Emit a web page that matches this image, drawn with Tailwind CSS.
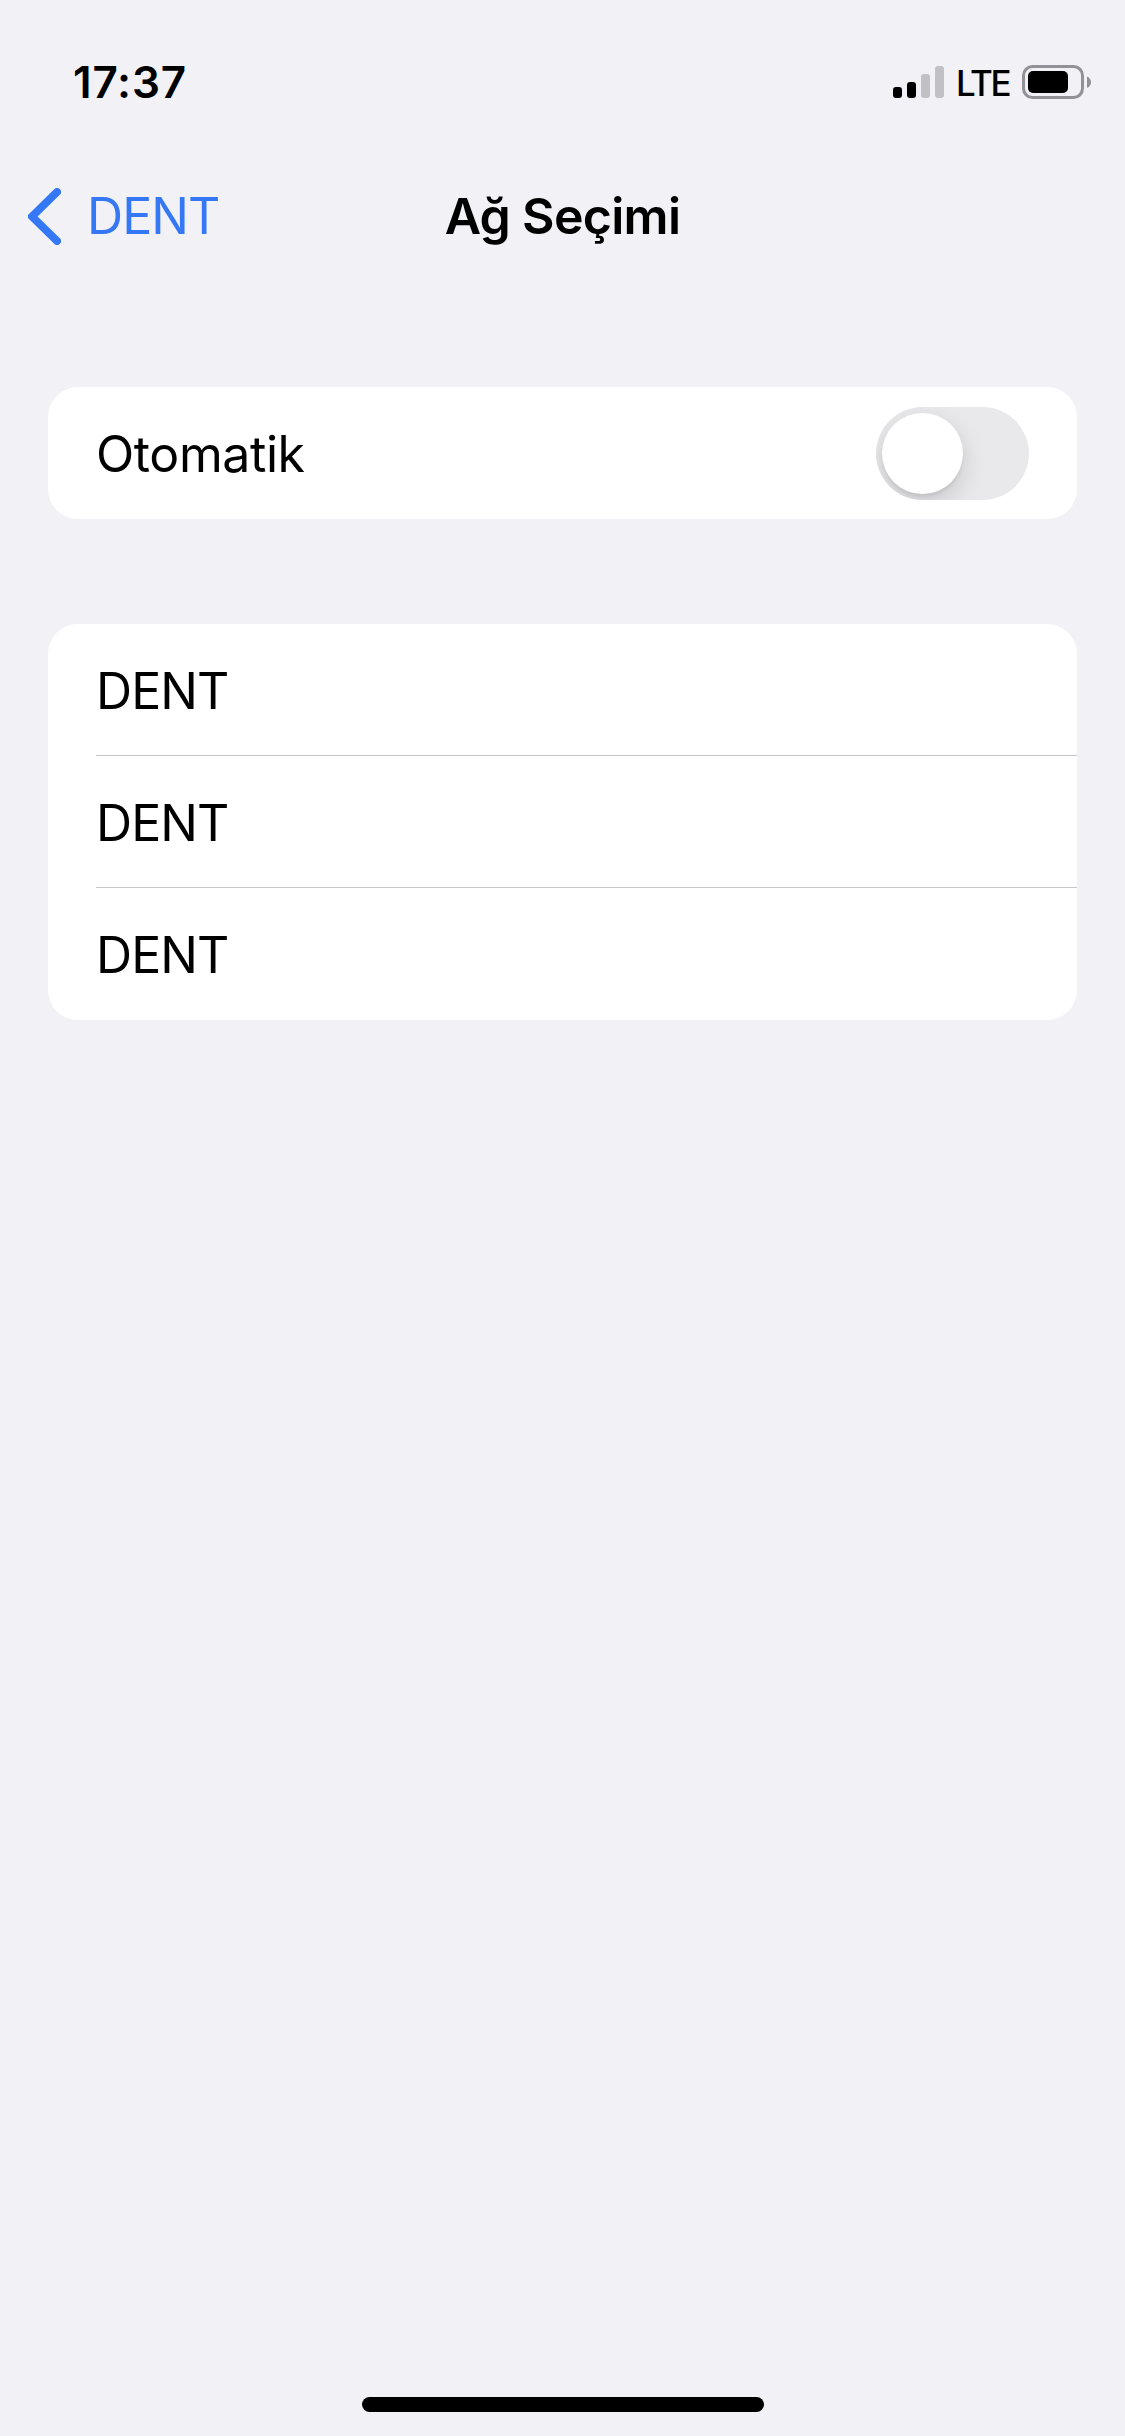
<!DOCTYPE html>
<html lang="tr">
<head>
<meta charset="utf-8">
<title>Ağ Seçimi</title>
<script src="https://cdn.jsdelivr.net/npm/@tailwindcss/browser@4"></script>
</head>
<body class="bg-[#f2f1f6]">
<div class="flex flex-col w-[1125px] h-[2436px] overflow-hidden bg-[#f2f1f6] text-black font-['Inter',sans-serif]">
  <header class="flex flex-col">
    <div class="flex justify-between items-center h-[164px] pl-[73px] pr-[34px]">
      <time class="text-[44px] leading-[52px] font-semibold tracking-[0.8px]">17:37</time>
      <div class="flex items-center">
        <svg class="block" width="51" height="32" viewBox="0 0 51 32">
          <rect x="0" y="21" width="9" height="11" rx="3"/>
          <rect x="14" y="16" width="9" height="16" rx="3"/>
          <rect x="28" y="8" width="9" height="24" rx="3" fill="#c1c0c5"/>
          <rect x="42" y="0" width="9" height="32" rx="3" fill="#c1c0c5"/>
        </svg>
        <span class="w-[51px] ml-3 pt-0.5 text-[35px] leading-10 font-medium tracking-[-2.4px]">LTE</span>
        <svg class="block ml-[15px]" width="69" height="34" viewBox="0 0 69 34">
          <rect x="1.5" y="1.5" width="59" height="31" rx="9" fill="none" stroke="#929196" stroke-width="3"/>
          <rect x="6" y="6" width="40" height="22" rx="5"/>
          <path d="M65 11.5 Q69 13.5 69 17.2 Q69 21 65 23 Z" fill="#929196"/>
        </svg>
      </div>
    </div>
    <nav class="grid grid-cols-[1fr_auto_1fr] items-center h-[104px]">
      <a class="flex items-center pl-7 text-[#3478f6]">
        <svg class="block" width="33" height="57" viewBox="0 0 33 57" fill="none" stroke="currentColor" stroke-width="8" stroke-linecap="round" stroke-linejoin="round"><path d="M29 4 L4 28.500 L29 53"/></svg>
        <span class="ml-[26px] text-[50px] leading-[60px] tracking-[-0.9px]">DENT</span>
      </a>
      <h1 class="text-[50px] leading-[60px] font-semibold tracking-[-0.7px]">Ağ Seçimi</h1>
    </nav>
  </header>
  <main class="flex flex-col gap-[105px] px-12 pt-[119px]">
    <section class="flex items-center justify-between h-[132px] pl-12 pr-12 rounded-[30px] bg-white">
      <span class="pt-0.5 text-[50px] leading-[60px] tracking-[-0.4px]">Otomatik</span>
      <div class="flex items-center w-[153px] h-[93px] p-1.5 rounded-full bg-[#e9e9eb] overflow-hidden">
        <div class="size-[81px] rounded-full bg-white shadow-[0_9px_24px_rgba(0,0,0,0.15),0_3px_3px_rgba(0,0,0,0.06)]"></div>
      </div>
    </section>
    <ul class="h-[396px] pl-12 rounded-[30px] bg-white text-[50px] leading-[60px] tracking-[-0.9px]">
      <li class="flex items-center h-[132px] pt-[3px] border-b border-[#c6c6c8]">DENT</li>
      <li class="flex items-center h-[132px] pt-[3px] border-b border-[#c6c6c8]">DENT</li>
      <li class="flex items-center h-[132px] pt-0.5">DENT</li>
    </ul>
  </main>
  <footer class="mt-auto flex justify-center pb-6">
    <div class="w-[402px] h-[15px] rounded-full bg-black"></div>
  </footer>
</div>
</body>
</html>
